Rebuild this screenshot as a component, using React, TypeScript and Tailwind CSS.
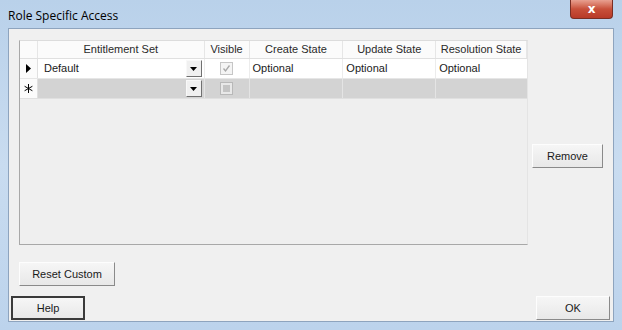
import React from "react";

const font = { fontFamily: '"Liberation Sans", Arial, sans-serif' };

function DropButton() {
  return (
    <div className="w-[16px] h-[17px] bg-[#f0f0f0] border border-t-[#f8f8f8] border-l-[#f8f8f8] border-r-[#707070] border-b-[#707070] flex items-center justify-center">
      <svg width="7" height="4" viewBox="0 0 7 4">
        <path d="M0 0 H7 L3.5 4 Z" fill="#000" />
      </svg>
    </div>
  );
}

function WinButton({ label, w, strong }: { label: string; w: string; strong?: boolean }) {
  return (
    <button
      className={`${w} h-[24px] text-[11px] text-[#1a1a1a] bg-gradient-to-b from-[#f6f6f6] to-[#e8e8e8] ${
        strong
          ? "border-2 border-[#3a3a3a]"
          : "border border-t-[#fdfdfd] border-l-[#fdfdfd] border-r-[#8a8a8a] border-b-[#8a8a8a]"
      }`}
      style={font}
    >
      {label}
    </button>
  );
}

export default function App() {
  const cols = [
    { name: "Entitlement Set", w: "w-[167px]" },
    { name: "Visible", w: "w-[45px]" },
    { name: "Create State", w: "w-[94px]" },
    { name: "Update State", w: "w-[93px]" },
    { name: "Resolution State", w: "w-[91px]" },
  ];

  return (
    <div
      className="w-[622px] h-[330px] flex flex-col bg-gradient-to-b from-[#b9d1ea] via-[#c9dcf0] to-[#bcd3ec] overflow-hidden"
      style={font}
    >
      {/* title bar */}
      <div className="h-[28px] flex items-start justify-between shrink-0">
        <div className="pl-[8px] pt-[7px] text-[12px] text-black" style={{ fontFamily: '"Open Sans", "Noto Sans", sans-serif' }}>
          Role Specific Access
        </div>
        <div className="mr-[9px] w-[43px] h-[19px] rounded-b-[4px] bg-gradient-to-b from-[#e8a090] via-[#c8503a] to-[#b83a28] border border-[#7a2e24] border-t-0 flex items-center justify-center">
          <span className="text-white text-[12px] font-bold leading-none" style={{ fontFamily: '"DejaVu Sans", sans-serif' }}>
            x
          </span>
        </div>
      </div>

      {/* client */}
      <div className="mx-[8px] mb-[8px] flex-1 bg-[#f0f0f0] border border-[#8ea4be] flex flex-col">
        <div className="flex pl-[10px] pt-[11px]">
          {/* grid */}
          <div className="w-[509px] h-[205px] bg-[#efefef] border border-t-[#dcdcdc] border-r-[#e4e4e4] border-l-[#a8a8a8] border-b-[#a8a8a8] flex flex-col">
            {/* header */}
            <div className="flex h-[18px] bg-[#fbfbfb] border-b border-[#e0e0e0] text-[11px] text-[#2a2a2a]">
              <div className="w-[18px] border-r border-[#e6e6e6]" />
              {cols.map((c) => (
                <div
                  key={c.name}
                  className={`${c.w} flex items-center justify-center border-r border-[#e6e6e6]`}
                >
                  {c.name}
                </div>
              ))}
            </div>
            {/* row 1 */}
            <div className="flex h-[20px] bg-white text-[11px] text-[#1a1a1a] border-b border-[#e6e6e6]">
              <div className="w-[18px] bg-[#fbfbfb] border-r border-[#e0e0e0] flex items-center justify-center">
                <svg width="5" height="9" viewBox="0 0 5 9">
                  <path d="M0 0 L5 4.5 L0 9 Z" fill="#000" />
                </svg>
              </div>
              <div className="w-[167px] flex items-center justify-between pl-[6px] pr-[2px] border-r border-[#ececec]">
                <span>Default</span>
                <DropButton />
              </div>
              <div className="w-[45px] flex items-center justify-center border-r border-[#ececec]">
                <div className="w-[13px] h-[13px] border border-[#c6c6c6] bg-[#f4f4f4] flex items-center justify-center">
                  <svg width="9" height="9" viewBox="0 0 9 9">
                    <path d="M1.5 4.5 L3.5 7 L7.5 1.5" stroke="#a8a8a8" strokeWidth="1.3" fill="none" />
                  </svg>
                </div>
              </div>
              <div className="w-[94px] flex items-center pl-[3px] border-r border-[#ececec]">Optional</div>
              <div className="w-[93px] flex items-center pl-[3px] border-r border-[#ececec]">Optional</div>
              <div className="w-[91px] flex items-center pl-[3px]">Optional</div>
            </div>
            {/* new row */}
            <div className="flex h-[20px] bg-[#d3d3d3] text-[11px] text-black border-b border-[#e0e0e0]">
              <div className="w-[18px] bg-[#fbfbfb] border-r border-[#e0e0e0] flex items-center justify-center">
                <svg width="9" height="9" viewBox="0 0 9 9">
                  <path d="M4.5 0 V9 M0.6 2.25 L8.4 6.75 M0.6 6.75 L8.4 2.25" stroke="#000" strokeWidth="1" />
                </svg>
              </div>
              <div className="w-[167px] flex items-center justify-end pr-[2px] border-r border-[#e4e4e4]">
                <DropButton />
              </div>
              <div className="w-[45px] flex items-center justify-center border-r border-[#e4e4e4]">
                <div className="w-[13px] h-[13px] border border-[#b8b8b8] bg-[#e8e8e8] flex items-center justify-center">
                  <div className="w-[7px] h-[7px] bg-[#c4c4c4]" />
                </div>
              </div>
              <div className="w-[94px] border-r border-[#e4e4e4]" />
              <div className="w-[93px] border-r border-[#e4e4e4]" />
              <div className="w-[91px]" />
            </div>
          </div>

          {/* right column */}
          <div className="ml-[4px] pt-[103px]">
            <WinButton label="Remove" w="w-[71px]" />
          </div>
        </div>

        <div className="pl-[10px] pt-[16px]">
          <WinButton label="Reset Custom" w="w-[96px]" />
        </div>

        <div className="flex justify-between pl-[2px] pr-[3px] pt-[10px]">
          <WinButton label="Help" w="w-[74px]" strong />
          <WinButton label="OK" w="w-[74px]" />
        </div>
      </div>
    </div>
  );
}
